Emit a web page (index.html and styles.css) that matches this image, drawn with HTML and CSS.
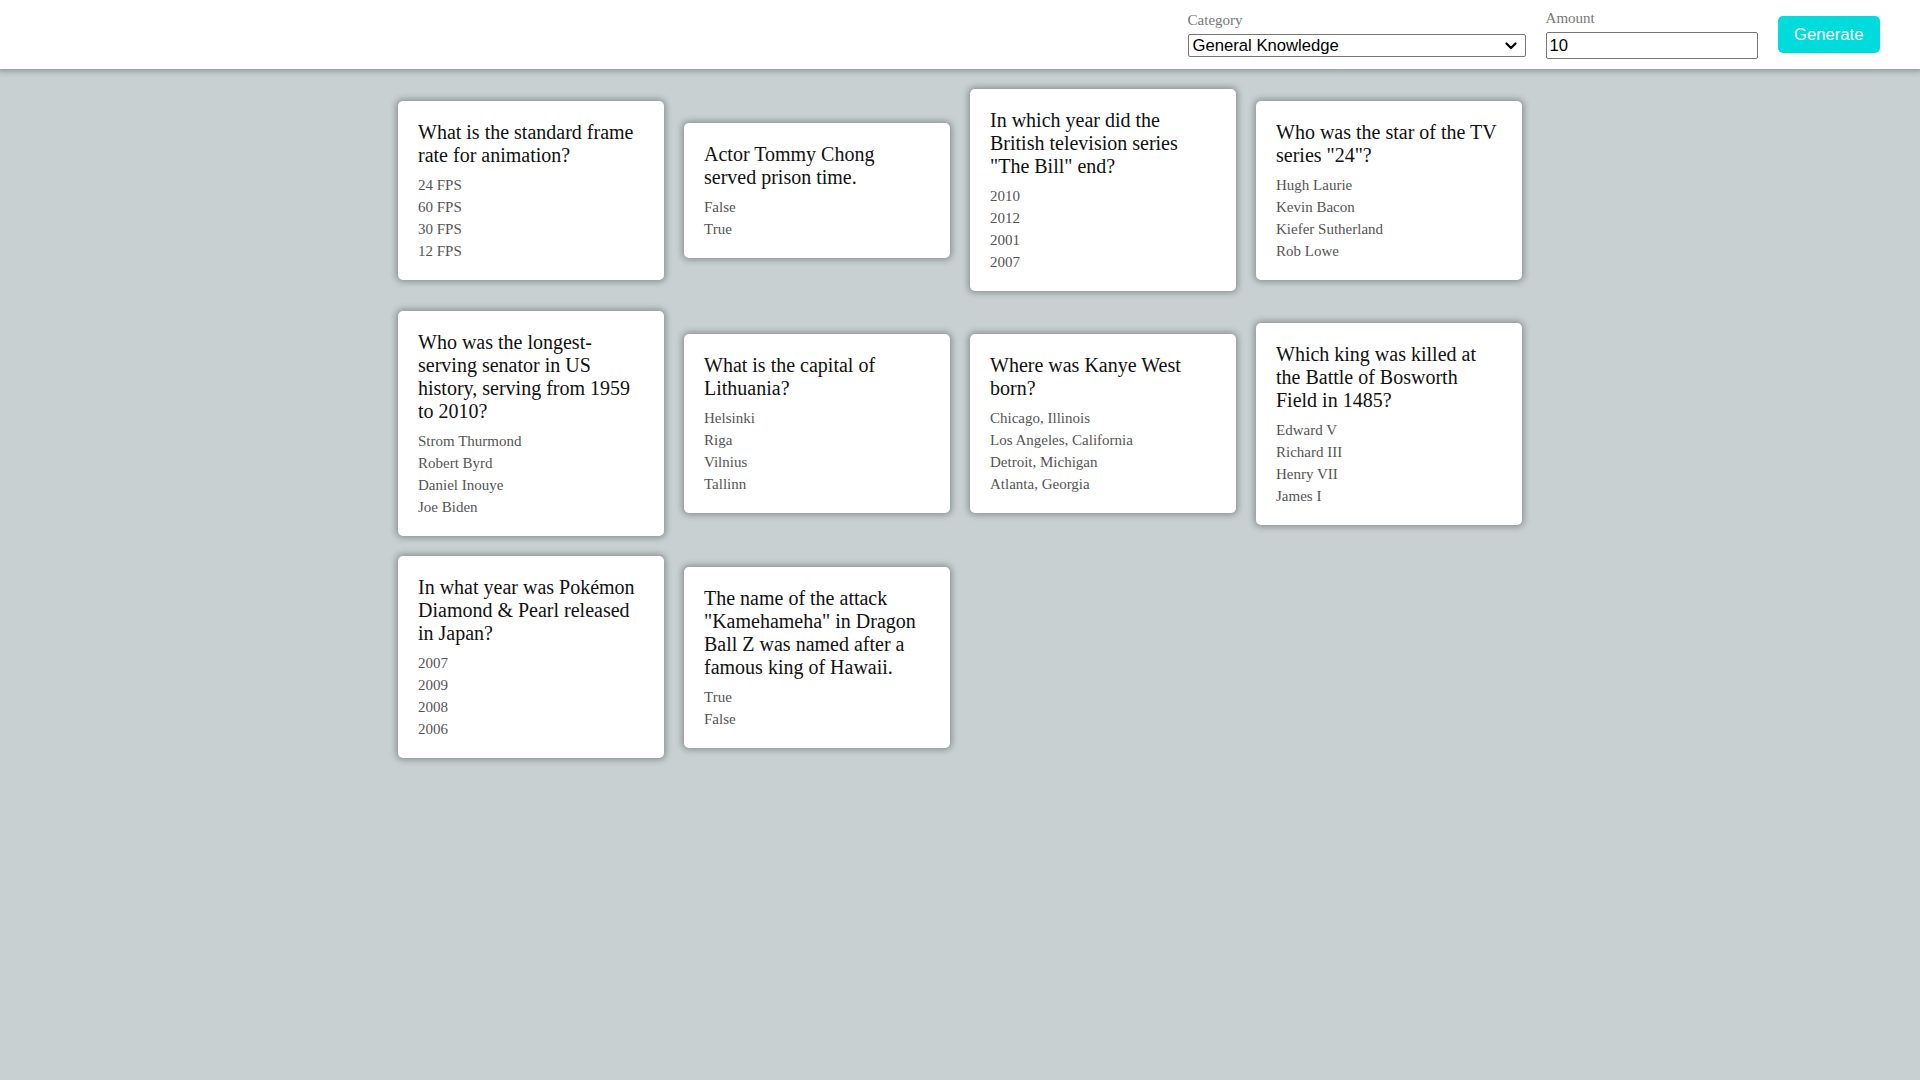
FILE: index.html
```html
<!DOCTYPE html>
<html lang="en">
<head>
<meta charset="utf-8">
<title>Flashcards</title>
<link rel="stylesheet" href="styles.css">
</head>
<body>
<form class="header">
  <div class="form-group">
    <label for="category">Category</label>
    <div class="select-wrap">
      <select id="category" class="category-select">
        <option>General Knowledge</option>
      </select>
      <svg class="chevron" width="12" height="8" viewBox="0 0 12 8" aria-hidden="true">
        <path d="M1.5 1.5 L6 6 L10.5 1.5" fill="none" stroke="#000" stroke-width="2.2" stroke-linecap="round" stroke-linejoin="round"/>
      </svg>
    </div>
  </div>
  <div class="form-group">
    <label for="amount">Amount</label>
    <input id="amount" class="amount-input" type="number" value="10">
  </div>
  <div class="form-group">
    <button type="button" class="btn">Generate</button>
  </div>
</form>
<div class="container">
  <div class="card-grid">
    <div class="card">
      <div class="question">What is the standard frame rate for animation?</div>
      <div class="options">
        <div class="option">24 FPS</div>
        <div class="option">60 FPS</div>
        <div class="option">30 FPS</div>
        <div class="option">12 FPS</div>
      </div>
    </div>
    <div class="card">
      <div class="question">Actor Tommy Chong served prison time.</div>
      <div class="options">
        <div class="option">False</div>
        <div class="option">True</div>
      </div>
    </div>
    <div class="card">
      <div class="question">In which year did the British television series "The Bill" end?</div>
      <div class="options">
        <div class="option">2010</div>
        <div class="option">2012</div>
        <div class="option">2001</div>
        <div class="option">2007</div>
      </div>
    </div>
    <div class="card">
      <div class="question">Who was the star of the TV series "24"?</div>
      <div class="options">
        <div class="option">Hugh Laurie</div>
        <div class="option">Kevin Bacon</div>
        <div class="option">Kiefer Sutherland</div>
        <div class="option">Rob Lowe</div>
      </div>
    </div>
    <div class="card">
      <div class="question">Who was the longest-serving senator in US history, serving from 1959 to 2010?</div>
      <div class="options">
        <div class="option">Strom Thurmond</div>
        <div class="option">Robert Byrd</div>
        <div class="option">Daniel Inouye</div>
        <div class="option">Joe Biden</div>
      </div>
    </div>
    <div class="card">
      <div class="question">What is the capital of Lithuania?</div>
      <div class="options">
        <div class="option">Helsinki</div>
        <div class="option">Riga</div>
        <div class="option">Vilnius</div>
        <div class="option">Tallinn</div>
      </div>
    </div>
    <div class="card">
      <div class="question">Where was Kanye West born?</div>
      <div class="options">
        <div class="option">Chicago, Illinois</div>
        <div class="option">Los Angeles, California</div>
        <div class="option">Detroit, Michigan</div>
        <div class="option">Atlanta, Georgia</div>
      </div>
    </div>
    <div class="card">
      <div class="question">Which king was killed at the Battle of Bosworth Field in 1485?</div>
      <div class="options">
        <div class="option">Edward V</div>
        <div class="option">Richard III</div>
        <div class="option">Henry VII</div>
        <div class="option">James I</div>
      </div>
    </div>
    <div class="card">
      <div class="question">In what year was Pokémon Diamond &amp; Pearl released in Japan?</div>
      <div class="options">
        <div class="option">2007</div>
        <div class="option">2009</div>
        <div class="option">2008</div>
        <div class="option">2006</div>
      </div>
    </div>
    <div class="card">
      <div class="question">The name of the attack "Kamehameha" in Dragon Ball Z was named after a famous king of Hawaii.</div>
      <div class="options">
        <div class="option">True</div>
        <div class="option">False</div>
      </div>
    </div>
  </div>
</div>
</body>
</html>
```

FILE: styles.css
```css
html, body {
  margin: 0;
  padding: 0;
}

body {
  background-color: #c8d0d2;
  font-family: "Liberation Serif", "Times New Roman", serif;
  min-height: 100vh;
}

.header {
  display: flex;
  justify-content: flex-end;
  align-items: center;
  background-color: #ffffff;
  padding: 0 30px;
  height: 69px;
  box-sizing: border-box;
  box-shadow: 0 0 6px 2px rgba(0, 0, 0, 0.3);
  position: relative;
  z-index: 1;
  margin: 0;
}

.form-group {
  display: flex;
  flex-direction: column;
  margin: 10px;
}

.form-group > label {
  color: #777;
  font-size: 15px;
  line-height: 17px;
  margin-bottom: 5px;
}

.select-wrap {
  position: relative;
  width: 338px;
  height: 23px;
}

.category-select {
  -webkit-appearance: none;
  appearance: none;
  width: 338px;
  height: 23px;
  box-sizing: border-box;
  font-family: "Liberation Sans", Arial, sans-serif;
  font-size: 16.67px;
  line-height: 21px;
  color: #000;
  border: 1px solid #767676;
  border-radius: 2px;
  background-color: #fff;
  padding: 0 24px 0 4px;
  margin: 0;
}

.chevron {
  position: absolute;
  right: 9px;
  top: 8px;
  pointer-events: none;
}

.amount-input {
  width: 212px;
  height: 27px;
  box-sizing: border-box;
  font-family: "Liberation Sans", Arial, sans-serif;
  font-size: 16.67px;
  color: #000;
  border: 1px solid #767676;
  border-radius: 2px;
  padding: 1px 3px;
  margin: 0;
  -moz-appearance: textfield;
}

.amount-input::-webkit-outer-spin-button,
.amount-input::-webkit-inner-spin-button {
  -webkit-appearance: none;
  margin: 0;
}

.btn {
  background-color: #00dcdc;
  color: #ffffff;
  font-family: "Liberation Sans", Arial, sans-serif;
  font-size: 16.67px;
  line-height: 20px;
  padding: 8.5px 16.5px;
  border: none;
  border-radius: 5px;
  cursor: pointer;
}

.container {
  width: 1124px;
  margin: 20px auto;
}

.card-grid {
  display: grid;
  grid-template-columns: repeat(4, 1fr);
  align-items: center;
  gap: 20px;
}

.card {
  background-color: #ffffff;
  border-radius: 5px;
  box-shadow: 0 0 6px 2px rgba(0, 0, 0, 0.3);
  padding: 20px;
  cursor: pointer;
}

.question {
  font-size: 20px;
  line-height: 23px;
  color: #111;
}

.options {
  margin-top: 10px;
}

.option {
  margin-top: 5px;
  color: #555;
  font-size: 15px;
  line-height: 17px;
}

.option:first-child {
  margin-top: 0;
}
```
